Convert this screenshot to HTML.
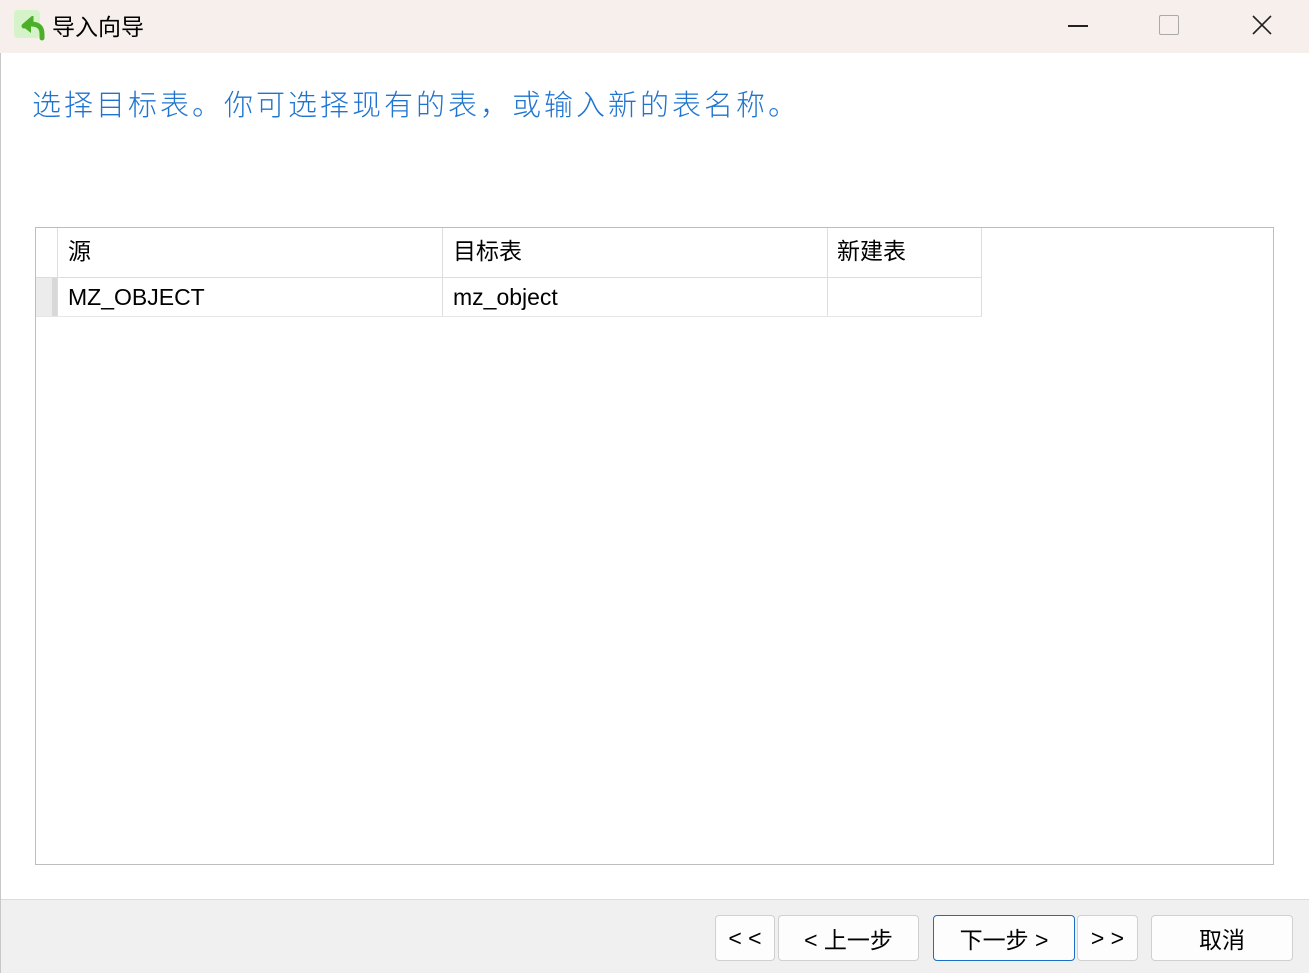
<!DOCTYPE html>
<html><head><meta charset="utf-8"><style>
*{margin:0;padding:0;box-sizing:border-box}
body{width:1309px;height:973px;position:relative;background:#fff;font-family:"Liberation Sans","Noto Sans CJK SC",sans-serif;overflow:hidden}
.title{position:absolute;left:0;top:0;width:1309px;height:53px;background:#f6efec}
.abs{position:absolute}
.btn{position:absolute;top:915px;height:46px;border:1px solid #d0d0d0;border-radius:4px;background:#fdfdfd;font-size:23px;color:#000;display:flex;align-items:center;justify-content:center}
</style></head><body>
<div class="title"></div>
<div class="abs" style="left:14px;top:10px;width:26px;height:28px;background:#d5f3c8;border-radius:4px"></div>
<svg class="abs" style="left:20px;top:16px" width="28" height="26" viewBox="0 0 28 26"><path d="M4 10 L11 4 L11 8 Q22 8 22 18 L22 22" stroke="#4caf2a" stroke-width="5" fill="none" stroke-linecap="round"/><path d="M2 10 L11 2 L11 17 Z" fill="#4caf2a"/></svg>
<div class="abs" style="left:52px;top:8px;font-size:23px;color:#000">导入向导</div>
<div class="abs" style="left:1068px;top:25px;width:20px;height:1.5px;background:#222"></div>
<div class="abs" style="left:1159px;top:15px;width:20px;height:20px;border:1.5px solid #aaa;border-radius:2px"></div>
<svg class="abs" style="left:1252px;top:15px" width="20" height="20"><path d="M1 1L19 19M19 1L1 19" stroke="#222" stroke-width="1.6"/></svg>
<div class="abs" style="left:0;top:53px;width:1px;height:920px;background:#c8c8c8"></div>
<div class="abs" style="left:32px;top:82px;font-size:29px;color:#1f74d0;letter-spacing:3px;font-weight:300">选择目标表。你可选择现有的表，或输入新的表名称。</div>
<div class="abs" style="left:35px;top:227px;width:1239px;height:638px;border:1px solid #bdbdbd;background:#fff"></div>
<div class="abs" style="left:36px;top:228px;width:946px;height:89px">
 <div class="abs" style="left:21px;top:0;width:1px;height:89px;background:#ddd"></div>
 <div class="abs" style="left:406px;top:0;width:1px;height:89px;background:#ddd"></div>
 <div class="abs" style="left:791px;top:0;width:1px;height:89px;background:#ddd"></div>
 <div class="abs" style="left:945px;top:0;width:1px;height:89px;background:#ddd"></div>
 <div class="abs" style="left:0;top:49px;width:946px;height:1px;background:#ddd"></div>
 <div class="abs" style="left:0;top:88px;width:946px;height:1px;background:#e6e6e6"></div>
 <div class="abs" style="left:0;top:50px;width:21px;height:38px;background:#ececec"></div>
 <div class="abs" style="left:16px;top:50px;width:5px;height:38px;background:#d8d8d8"></div>
 <div class="abs" style="left:32px;top:4px;font-size:23px">源</div>
 <div class="abs" style="left:417px;top:4px;font-size:23px">目标表</div>
 <div class="abs" style="left:801px;top:4px;font-size:23px">新建表</div>
 <div class="abs" style="left:32px;top:56px;font-size:23px">MZ_OBJECT</div>
 <div class="abs" style="left:417px;top:56px;font-size:23px">mz_object</div>
</div>
<div class="abs" style="left:1px;top:899px;width:1308px;height:74px;background:#f0f0f0;border-top:1px solid #dcdcdc"></div>
<div class="btn" style="left:715px;width:60px">&lt; &lt;</div>
<div class="btn" style="left:778px;width:141px">&lt; 上一步</div>
<div class="btn" style="left:933px;width:142px;border-color:#1a6fc4">下一步 &gt;</div>
<div class="btn" style="left:1077px;width:61px">&gt; &gt;</div>
<div class="btn" style="left:1151px;width:142px">取消</div>
</body></html>
